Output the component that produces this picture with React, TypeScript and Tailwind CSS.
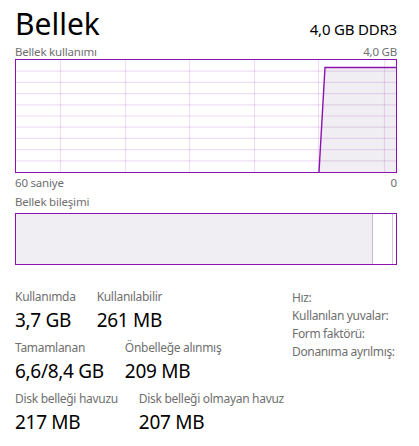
const PURPLE = '#8b12ae';

function UsageChart() {
  const w = 380;
  const h = 112;
  const rows = Array.from({ length: 9 }, (_, i) => ((i + 1) * h) / 10);
  const cols = [44, 109, 173, 238, 302, 368];
  return (
    <div className="h-[114px] w-full border border-[#8b12ae] bg-white">
      <svg width={w} height={h} viewBox={`0 0 ${w} ${h}`} className="block">
        <polygon points={`303,${h} 309,7 ${w},7 ${w},${h}`} fill="#f1eef3" />
        {rows.map((y) => (
          <line key={y} x1={0} x2={w} y1={y} y2={y} stroke={PURPLE} strokeOpacity={0.14} strokeWidth={1.2} />
        ))}
        {cols.map((x) => (
          <line key={x} x1={x + 0.5} x2={x + 0.5} y1={0} y2={h} stroke={PURPLE} strokeOpacity={0.14} strokeWidth={1.2} />
        ))}
        <polyline points={`303,${h} 309,7.5 ${w},7.5`} fill="none" stroke={PURPLE} strokeWidth={1.4} />
      </svg>
    </div>
  );
}

function Stat({ label, value }: { label: string; value: string }) {
  return (
    <div className="flex flex-col whitespace-nowrap">
      <span className="text-[12px] leading-[16px] tracking-[-0.3px] text-[#6f6f6f]">{label}</span>
      <span className="mt-[3px] text-[19px] leading-[24px] tracking-[-0.3px] text-black">{value}</span>
    </div>
  );
}

export default function App() {
  return (
    <div className="h-[446px] w-[419px] bg-white pl-[15px] pr-[22px] font-['Noto_Sans',sans-serif]">
      <div className="flex items-end justify-between pt-[4px]">
        <h1 className="text-[30px] leading-[40px] font-normal text-black">Bellek</h1>
        <span className="mb-[5px] text-[15px] leading-[20px] tracking-[-0.2px] text-black">4,0 GB DDR3</span>
      </div>
      <div className="flex justify-between text-[11.5px] leading-[15px] tracking-[-0.2px] text-[#6f6f6f]">
        <span>Bellek kullanımı</span>
        <span>4,0 GB</span>
      </div>
      <UsageChart />
      <div className="mt-[2px] flex justify-between text-[11.5px] leading-[16px] tracking-[-0.2px] text-[#6f6f6f]">
        <span>60 saniye</span>
        <span>0</span>
      </div>
      <div className="mt-[3px] text-[11.5px] leading-[16px] tracking-[-0.2px] text-[#6f6f6f]">Bellek bileşimi</div>
      <div className="mt-[3px] flex h-[52px] border border-[#8b12ae]">
        <div className="w-[357px] border-r border-[#c9b8ce] bg-[#f1eef3]" />
        <div className="w-[20px] border-r border-[#d6c8da]" />
      </div>
      <div className="mt-[24px] flex">
        <div className="flex flex-1 flex-col gap-[8px]">
          <div className="flex gap-[21px]">
            <Stat label="Kullanımda" value="3,7 GB" />
            <Stat label="Kullanılabilir" value="261 MB" />
          </div>
          <div className="flex gap-[21px]">
            <Stat label="Tamamlanan" value="6,6/8,4 GB" />
            <Stat label="Önbelleğe alınmış" value="209 MB" />
          </div>
          <div className="flex gap-[21px]">
            <Stat label="Disk belleği havuzu" value="217 MB" />
            <Stat label="Disk belleği olmayan havuz" value="207 MB" />
          </div>
        </div>
        <div className="flex w-[105px] flex-col whitespace-nowrap text-[12px] leading-[18px] tracking-[-0.35px] text-[#6f6f6f]">
          <span>Hız:</span>
          <span>Kullanılan yuvalar:</span>
          <span>Form faktörü:</span>
          <span>Donanıma ayrılmış:</span>
        </div>
      </div>
    </div>
  );
}
